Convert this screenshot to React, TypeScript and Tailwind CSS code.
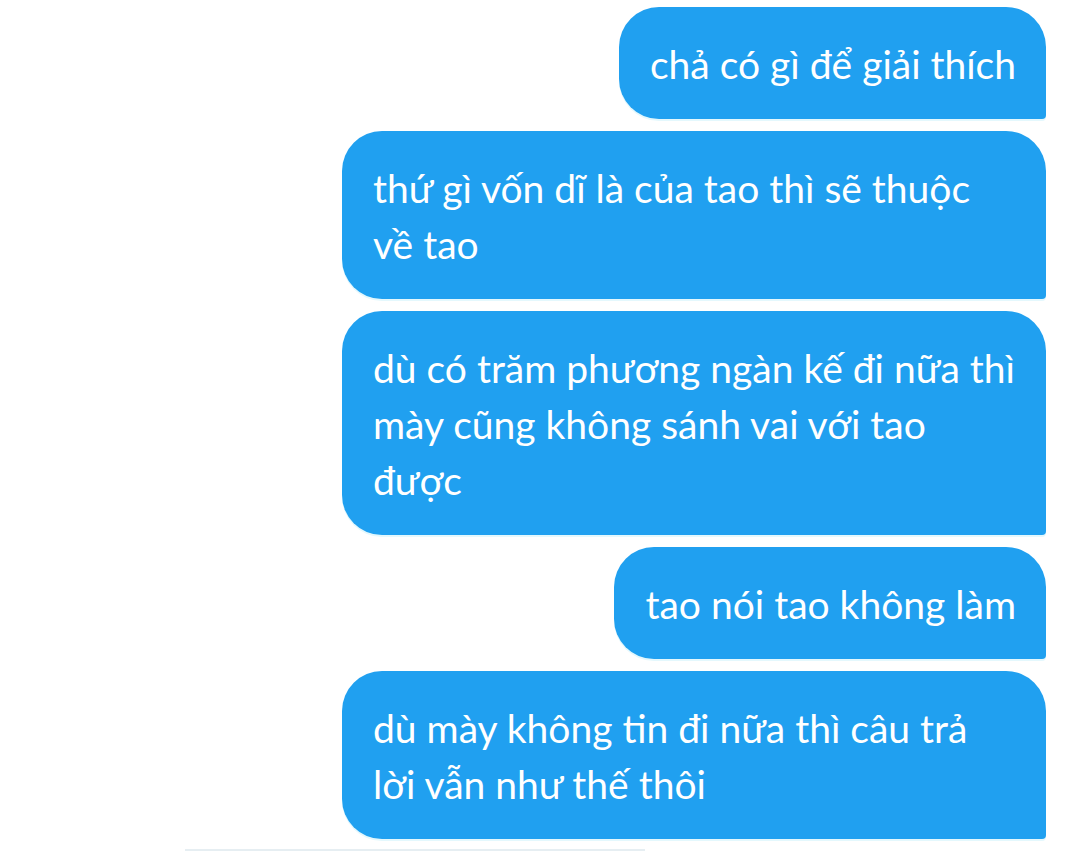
import React from 'react';

const messages = [
  'chả có gì để giải thích',
  'thứ gì vốn dĩ là của tao thì sẽ thuộc về tao',
  'dù có trăm phương ngàn kế đi nữa thì mày cũng không sánh vai với tao được',
  'tao nói tao không làm',
  'dù mày không tin đi nữa thì câu trả lời vẫn như thế thôi',
];

export default function App() {
  return (
    <div
      className="w-[1080px] h-[852px] bg-white overflow-hidden flex flex-col"
      style={{ fontFamily: '"Lato", "Noto Sans", sans-serif' }}
    >
      <div className="flex flex-col items-end gap-[12px] pt-[7px] pr-[34px]">
        {messages.map((text, i) => (
          <div
            key={i}
            className="max-w-[704px] bg-[#20a0f0] text-white text-[39px] leading-[56px] pl-[31px] pr-[30px] pt-[29px] pb-[27px] rounded-[40px] rounded-br-[4px] shadow-[0_2px_0_#e4f8fd]"
          >
            {text}
          </div>
        ))}
      </div>
      <div className="mt-auto mb-[1px] ml-[185px] w-[460px] h-[2px] bg-[#e6eef2]" />
    </div>
  );
}
